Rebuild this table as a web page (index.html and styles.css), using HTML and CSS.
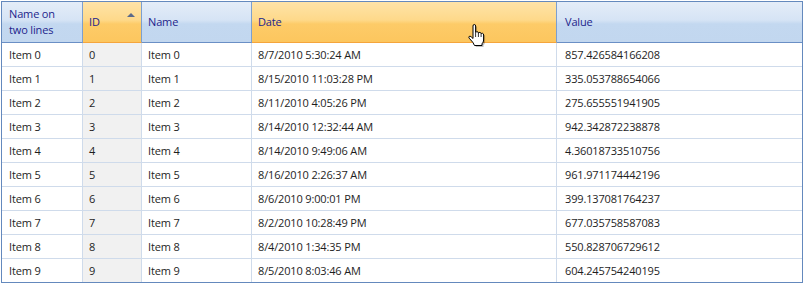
FILE: index.html
```html
<!DOCTYPE html>
<html>
<head>
<meta charset="utf-8">
<link rel="stylesheet" href="styles.css">
</head>
<body>
<div class="grid" role="table">
  <div class="hcell blue first" role="columnheader">Name on<br>two lines</div>
  <div class="hcell orange sorted" role="columnheader">ID<span class="sort-arrow"></span></div>
  <div class="hcell blue" role="columnheader">Name</div>
  <div class="hcell orange hover" role="columnheader">Date
    <svg class="cursor" width="20" height="25" viewBox="0 0 20 25">
      <path d="M7.5,22.5 L5.8,19.3 L2.2,15.2 Q1.4,14 2.2,13.4 Q3,12.8 4.2,13.8 L6,15.5 L6,3 Q6,1.5 7.3,1.5 Q8.6,1.5 8.6,3 L8.6,9.6 Q9.2,8.6 10.3,8.7 Q11.3,8.8 11.4,10 Q12,9.3 13,9.4 Q13.9,9.5 14.1,10.7 Q14.7,10.1 15.6,10.3 Q16.6,10.6 16.6,12 L16.6,17 Q16.6,19.3 15,20.8 L15,22.5 Z" fill="rgba(0,0,0,0.25)" transform="translate(1.5,1.5)"/>
      <path d="M7.5,22.5 L5.8,19.3 L2.2,15.2 Q1.4,14 2.2,13.4 Q3,12.8 4.2,13.8 L6,15.5 L6,3 Q6,1.5 7.3,1.5 Q8.6,1.5 8.6,3 L8.6,9.6 Q9.2,8.6 10.3,8.7 Q11.3,8.8 11.4,10 Q12,9.3 13,9.4 Q13.9,9.5 14.1,10.7 Q14.7,10.1 15.6,10.3 Q16.6,10.6 16.6,12 L16.6,17 Q16.6,19.3 15,20.8 L15,22.5 Z" fill="#fff" stroke="#000" stroke-width="1" stroke-linejoin="round"/>
      <path d="M8.6,10 L8.6,14 M11.4,10 L11.4,14 M14.1,10.8 L14.1,14" stroke="#000" stroke-width="0.8" fill="none"/>
    </svg>
  </div>
  <div class="hcell blue last" role="columnheader">Value</div>

  <div class="cell">Item 0</div><div class="cell id">0</div><div class="cell">Item 0</div><div class="cell">8/7/2010 5:30:24 AM</div><div class="cell last">857.426584166208</div>
  <div class="cell">Item 1</div><div class="cell id">1</div><div class="cell">Item 1</div><div class="cell">8/15/2010 11:03:28 PM</div><div class="cell last">335.053788654066</div>
  <div class="cell">Item 2</div><div class="cell id">2</div><div class="cell">Item 2</div><div class="cell">8/11/2010 4:05:26 PM</div><div class="cell last">275.655551941905</div>
  <div class="cell">Item 3</div><div class="cell id">3</div><div class="cell">Item 3</div><div class="cell">8/14/2010 12:32:44 AM</div><div class="cell last">942.342872238878</div>
  <div class="cell">Item 4</div><div class="cell id">4</div><div class="cell">Item 4</div><div class="cell">8/14/2010 9:49:06 AM</div><div class="cell last">4.36018733510756</div>
  <div class="cell">Item 5</div><div class="cell id">5</div><div class="cell">Item 5</div><div class="cell">8/16/2010 2:26:37 AM</div><div class="cell last">961.971174442196</div>
  <div class="cell">Item 6</div><div class="cell id">6</div><div class="cell">Item 6</div><div class="cell">8/6/2010 9:00:01 PM</div><div class="cell last">399.137081764237</div>
  <div class="cell">Item 7</div><div class="cell id">7</div><div class="cell">Item 7</div><div class="cell">8/2/2010 10:28:49 PM</div><div class="cell last">677.035758587083</div>
  <div class="cell">Item 8</div><div class="cell id">8</div><div class="cell">Item 8</div><div class="cell">8/4/2010 1:34:35 PM</div><div class="cell last">550.828706729612</div>
  <div class="cell lastrow">Item 9</div><div class="cell id lastrow">9</div><div class="cell lastrow">Item 9</div><div class="cell lastrow">8/5/2010 8:03:46 AM</div><div class="cell last lastrow">604.245754240195</div>
</div>
</body>
</html>
```
FILE: styles.css
```css
html, body {
  margin: 0;
  padding: 0;
  background: #ffffff;
}
body {
  padding: 1px 0 0 1px;
  font-family: "Open Sans", "Noto Sans", sans-serif;
  font-size: 11px;
  letter-spacing: -0.15px;
  color: #1e1e1e;
}
.grid {
  display: grid;
  grid-template-columns: 81px 59px 110px 305px 245px;
  grid-template-rows: 41px repeat(9, 24px) 23px;
  width: 800px;
  border: 1px solid #6489bd;
}
.hcell {
  box-sizing: border-box;
  padding: 0 6px;
  display: flex;
  align-items: center;
  line-height: 16px;
  color: #231f8c;
  border-right: 1px solid #7c9fcf;
  position: relative;
}
.hcell.first { padding-left: 7px; }
.hcell.last { border-right: none; padding-left: 8px; }
.hcell.blue {
  background: linear-gradient(#e4edf8 0%, #d6e4f5 45%, #c3d8f0 55%, #c2d7ef 100%);
  border-bottom: 1px solid #6a8fc5;
}
.hcell.orange {
  background: linear-gradient(#fee3a8 0%, #fed98a 45%, #fdcb68 55%, #fcc65e 100%);
  border-bottom: 1px solid #f5a53c;
}
.sort-arrow {
  position: absolute;
  right: 6px;
  top: 11px;
  width: 0;
  height: 0;
  border-left: 4px solid transparent;
  border-right: 4px solid transparent;
  border-bottom: 4px solid #5b6a8a;
}
.cursor {
  position: absolute;
  left: 215px;
  top: 21px;
  z-index: 2;
}
.cell {
  box-sizing: border-box;
  padding: 0 6px;
  display: flex;
  align-items: center;
  white-space: nowrap;
  border-right: 1px solid #cfdbeb;
  border-bottom: 1px solid #cfdbeb;
}
.cell:nth-child(5n+1) { padding-left: 7px; }
.cell.id { background: #f1f1f1; }
.cell.last { border-right: none; padding-left: 8px; }
.cell.lastrow { border-bottom: none; }
```
